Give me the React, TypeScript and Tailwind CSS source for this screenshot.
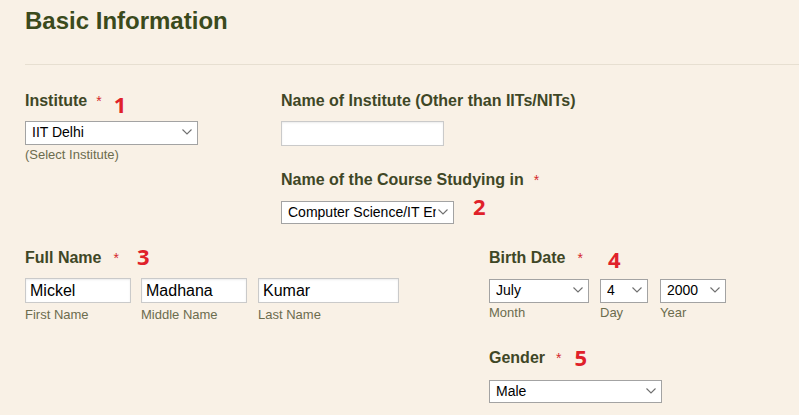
import React from 'react';

const Chevron = () => (
    <svg width="10" height="6" viewBox="0 0 10 6" className="pointer-events-none absolute right-[6px] top-1/2 -translate-y-1/2">
        <polyline points="0.5,0.5 5,5 9.5,0.5" fill="none" stroke="#6f6f6f" strokeWidth="1.1" />
    </svg>
);

function Select({ value, options, className }: { value: string; options: string[]; className: string }) {
    return (
        <div className={`relative ${className}`}>
            <select
                defaultValue={value}
                className="appearance-none w-full h-full bg-white border border-[#a3a3a3] pl-[6px] pr-[17px] text-[14px] text-black outline-none font-['Liberation_Sans',Arial,sans-serif]"
            >
                {options.map((o) => (
                    <option key={o}>{o}</option>
                ))}
            </select>
            <Chevron />
        </div>
    );
}

function Label({ text, gap, num, numGap, numDrop }: { text: string; gap: string; num?: string; numGap?: string; numDrop?: string }) {
    return (
        <div className="flex items-baseline h-[20px] leading-[20px] whitespace-nowrap">
            <span className="text-[16px] font-bold text-[#3f4726]">{text}</span>
            <span className={`text-[14px] text-[#d4272c] ${gap}`}>*</span>
            {num && (
                <span className={`relative text-[22px] leading-[8px] font-bold text-[#e0212a] font-['Open_Sans',sans-serif] ${numGap} ${numDrop}`}>
                    {num}
                </span>
            )}
        </div>
    );
}

const inputCls =
    'h-[25px] bg-white border border-[#cacaca] shadow-[inset_0_1px_2px_rgba(0,0,0,0.08)] px-[4px] text-[16px] text-black outline-none';

export default function App() {
    return (
        <div className="min-h-screen bg-[#f9f1e6] font-['Liberation_Sans',Arial,sans-serif]">
            {/* Heading */}
            <div className="px-[25px] pt-[7px]">
                <h1 className="text-[24px] leading-[28px] font-bold text-[#3b4a1c]">Basic Information</h1>
            </div>
            <div className="ml-[25px] mt-[29px] h-px bg-[#e7dfd1]" />

            {/* Institute / course */}
            <div className="px-[25px] pt-[26px] flex">
                <div className="w-[256px] shrink-0">
                    <Label text="Institute" gap="ml-[9px]" num="1" numGap="ml-[12px]" numDrop="top-[7px]" />
                    <Select value="IIT Delhi" options={['IIT Delhi', 'IIT Bombay', 'IIT Madras']} className="mt-[9px] w-[173px] h-[24px]" />
                    <div className="mt-[3px] text-[13px] leading-[16px] text-[#6c6c4e]">(Select Institute)</div>
                </div>
                <div>
                    <div className="h-[20px] leading-[20px] text-[16px] font-bold text-[#3f4726] whitespace-nowrap">
                        Name of Institute (Other than IITs/NITs)
                    </div>
                    <input className={`mt-[10px] w-[163px] ${inputCls}`} />
                    <div className="mt-[24px]">
                        <Label text="Name of the Course Studying in" gap="ml-[10px]" />
                    </div>
                    <div className="mt-[10px] flex items-start h-[23px]">
                        <Select
                            value="Computer Science/IT Engineering"
                            options={['Computer Science/IT Engineering', 'Electrical Engineering']}
                            className="w-[173px] h-[23px]"
                        />
                        <span className="ml-[19px] -mt-[5px] text-[22px] leading-[22px] font-bold text-[#e0212a] font-['Open_Sans',sans-serif]">2</span>
                    </div>
                </div>
            </div>

            {/* Name / birth date / gender */}
            <div className="px-[25px] pt-[25px] flex">
                <div className="w-[464px] shrink-0">
                    <Label text="Full Name" gap="ml-[12px]" num="3" numGap="ml-[18px]" numDrop="top-[2px]" />
                    <div className="mt-[10px] flex">
                        <div>
                            <input defaultValue="Mickel" className={`w-[106px] ${inputCls}`} />
                            <div className="mt-[4px] text-[13px] leading-[16px] text-[#6c6c4e]">First Name</div>
                        </div>
                        <div className="ml-[10px]">
                            <input defaultValue="Madhana" className={`w-[106px] ${inputCls}`} />
                            <div className="mt-[4px] text-[13px] leading-[16px] text-[#6c6c4e]">Middle Name</div>
                        </div>
                        <div className="ml-[11px]">
                            <input defaultValue="Kumar" className={`w-[141px] ${inputCls}`} />
                            <div className="mt-[4px] text-[13px] leading-[16px] text-[#6c6c4e]">Last Name</div>
                        </div>
                    </div>
                </div>
                <div>
                    <Label text="Birth Date" gap="ml-[12px]" num="4" numGap="ml-[25px]" numDrop="top-[5px]" />
                    <div className="mt-[10px] flex">
                        <div>
                            <Select value="July" options={['June', 'July', 'August']} className="w-[100px] h-[24px]" />
                            <div className="mt-[3px] text-[13px] leading-[16px] text-[#6c6c4e]">Month</div>
                        </div>
                        <div className="ml-[11px]">
                            <Select value="4" options={['3', '4', '5']} className="w-[48px] h-[24px]" />
                            <div className="mt-[3px] text-[13px] leading-[16px] text-[#6c6c4e]">Day</div>
                        </div>
                        <div className="ml-[12px]">
                            <Select value="2000" options={['1999', '2000', '2001']} className="w-[66px] h-[24px]" />
                            <div className="mt-[3px] text-[13px] leading-[16px] text-[#6c6c4e]">Year</div>
                        </div>
                    </div>
                    <div className="mt-[27px]">
                        <Label text="Gender" gap="ml-[11px]" num="5" numGap="ml-[13px]" numDrop="top-[3px]" />
                    </div>
                    <Select value="Male" options={['Male', 'Female']} className="mt-[11px] w-[173px] h-[23px]" />
                </div>
            </div>
        </div>
    );
}
